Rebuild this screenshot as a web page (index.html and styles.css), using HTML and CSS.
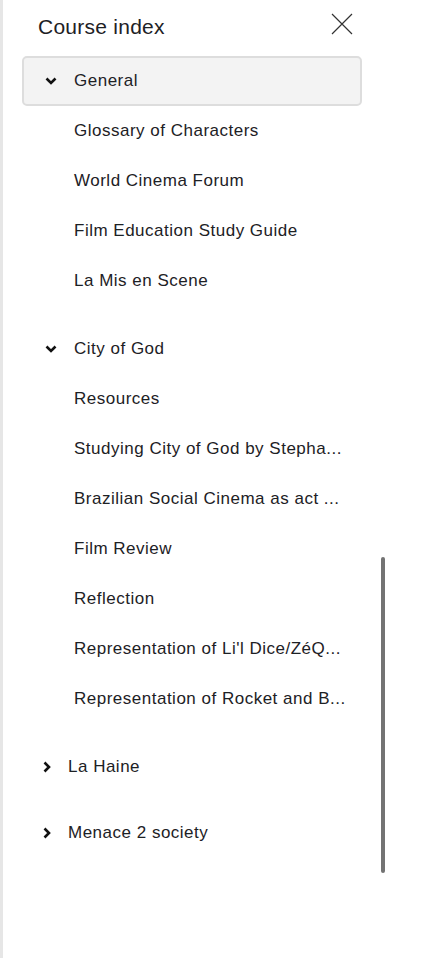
FILE: index.html
```html
<!DOCTYPE html>
<html>
<head>
<meta charset="utf-8">
<link rel="stylesheet" href="styles.css">
</head>
<body>
<div class="drawer">
  <div class="header">
    <h2 class="title">Course index</h2>
    <button class="close" aria-label="Close">
      <svg width="22" height="22" viewBox="0 0 22 22"><path d="M1 1L21 21M21 1L1 21" stroke="#333" stroke-width="1.2" fill="none"/></svg>
    </button>
  </div>
  <div class="index">
    <div class="section">
      <div class="section-head active">
        <svg class="chev-down" width="12" height="8" viewBox="0 0 12 8"><path d="M1.5 1.5L6 6L10.5 1.5" stroke="#111" stroke-width="2.6" fill="none"/></svg>
        <span>General</span>
      </div>
      <ul class="items">
        <li>Glossary of Characters</li>
        <li>World Cinema Forum</li>
        <li>Film Education Study Guide</li>
        <li>La Mis en Scene</li>
      </ul>
    </div>
    <div class="section">
      <div class="section-head">
        <svg class="chev-down" width="12" height="8" viewBox="0 0 12 8"><path d="M1.5 1.5L6 6L10.5 1.5" stroke="#111" stroke-width="2.6" fill="none"/></svg>
        <span>City of God</span>
      </div>
      <ul class="items">
        <li>Resources</li>
        <li>Studying City of God by Stepha...</li>
        <li>Brazilian Social Cinema as act ...</li>
        <li>Film Review</li>
        <li>Reflection</li>
        <li>Representation of Li'l Dice/ZéQ...</li>
        <li>Representation of Rocket and B...</li>
      </ul>
    </div>
    <div class="section collapsed">
      <div class="section-head">
        <svg class="chev-right" width="8" height="12" viewBox="0 0 8 12"><path d="M1.5 1.5L6 6L1.5 10.5" stroke="#111" stroke-width="2.6" fill="none"/></svg>
        <span>La Haine</span>
      </div>
    </div>
    <div class="section collapsed">
      <div class="section-head">
        <svg class="chev-right" width="8" height="12" viewBox="0 0 8 12"><path d="M1.5 1.5L6 6L1.5 10.5" stroke="#111" stroke-width="2.6" fill="none"/></svg>
        <span>Menace 2 society</span>
      </div>
    </div>
    <div class="scrollbar"></div>
  </div>
</div>
</body>
</html>
```
FILE: styles.css
```css
html, body {
  margin: 0;
  padding: 0;
  background: #fff;
}
body {
  font-family: "Liberation Sans", Arial, sans-serif;
  color: #1d2125;
}
.drawer {
  height: 958px;
  border-left: 3px solid #e6e6e6;
  box-sizing: border-box;
  position: relative;
}
.header {
  display: flex;
  align-items: center;
  justify-content: space-between;
  height: 52px;
  padding: 0 73px 0 35px;
}
.title {
  margin: 0;
  font-size: 21px;
  letter-spacing: 0.25px;
  font-weight: 400;
  color: #1d2125;
  padding-top: 1px;
}
.close {
  border: 0;
  background: none;
  padding: 0;
  width: 22px;
  height: 22px;
  margin-top: -4px;
}
.close svg { display: block; }
.index {
  padding: 4px 64px 0 19px;
  position: relative;
}
.section {
  margin-bottom: 18px;
}
.section.collapsed {
  margin-bottom: 16px;
}
.section-head {
  display: flex;
  align-items: center;
  height: 50px;
  font-size: 17px;
  letter-spacing: 0.5px;
  padding-left: 21px;
  box-sizing: border-box;
  border: 2px solid transparent;
  border-radius: 5px;
  color: #1d2125;
}
.section-head.active {
  background: #f3f3f3;
  border-color: #dddddd;
}
.chev-down {
  margin-right: 17px;
}
.collapsed .section-head {
  padding-left: 19px;
}
.chev-right {
  margin-right: 17px;
}
.items {
  list-style: none;
  margin: 0;
  padding: 0;
}
.items li {
  height: 50px;
  line-height: 50px;
  padding-left: 52px;
  font-size: 17px;
  letter-spacing: 0.5px;
  color: #1d2125;
  white-space: nowrap;
}
.scrollbar {
  position: absolute;
  left: 378px;
  top: 505px;
  width: 4px;
  height: 316px;
  background: #737373;
  border-radius: 2px;
}
```
